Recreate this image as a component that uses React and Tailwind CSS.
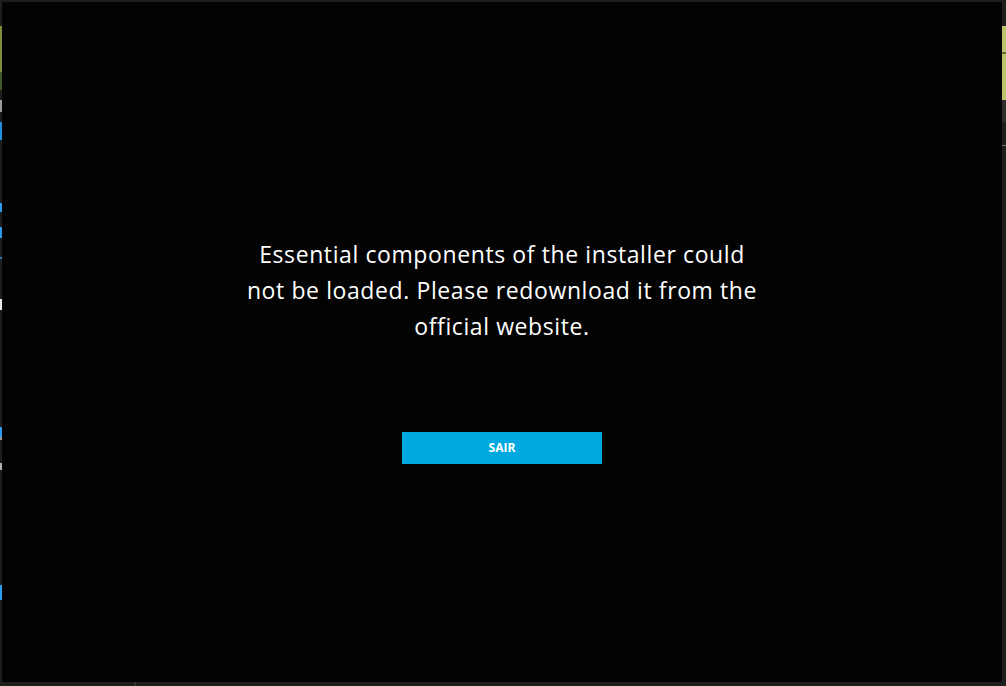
const leftBits = [
  [24, "#1e1e1e"], [46, "#7d8f3a"], [18, "#3f5a2a"], [10, "#1e1e1e"], [12, "#9a9a9a"], [10, "#1e1e1e"],
  [18, "#1e8fe0"], [63, "#1e1e1e"], [9, "#2a9df0"], [15, "#1e1e1e"], [11, "#2a9df0"], [19, "#1e1e1e"],
  [2, "#2a7fc0"], [40, "#1e1e1e"], [11, "#e8e8e8"], [117, "#1e1e1e"], [10, "#2a9df0"], [3, "#9a9a9a"],
  [23, "#1e1e1e"], [7, "#b0b0b0"], [115, "#1e1e1e"], [15, "#2a9df0"],
];
const rightBits = [
  [24, "#1e1e1e"], [26, "#b9c46c"], [2, "#5a6a30"], [46, "#b9c46c"], [22, "#2e2e2e"], [23, "#1e1e1e"], [1, "#777777"],
];

export default function App() {
  return (
    <div className="w-[1006px] h-[686px] bg-[#1e1e1e] flex flex-col overflow-hidden" style={{ fontFamily: "'Open Sans', Lato, sans-serif" }}>
      <div className="h-[2px] shrink-0" />
      <div className="flex flex-1 min-h-0">
        <div className="w-[2px] flex flex-col shrink-0">
          {leftBits.map(([h, c], i) => (
            <div key={i} className="w-full shrink-0" style={{ height: h, background: c }} />
          ))}
        </div>
        <div className="w-[1000px] h-[680px] bg-[#030303] flex flex-col items-center pt-[234px]">
          <p className="text-white text-[23px] leading-[36px] font-medium text-center tracking-[0.6px] whitespace-nowrap">
            Essential components of the installer could
            <br />
            not be loaded. Please redownload it from the
            <br />
            official website.
          </p>
          <button className="mt-[88px] w-[200px] h-[32px] bg-[#00a8e0] text-white text-[12px] font-bold flex items-center justify-center">
            SAIR
          </button>
        </div>
        <div className="w-[4px] flex flex-col shrink-0">
          {rightBits.map(([h, c], i) => (
            <div key={i} className="w-full shrink-0" style={{ height: h, background: c }} />
          ))}
        </div>
      </div>
      <div className="h-[4px] shrink-0 flex">
        <div className="w-[134px]" />
        <div className="w-[2px] bg-[#333]" />
      </div>
    </div>
  );
}
